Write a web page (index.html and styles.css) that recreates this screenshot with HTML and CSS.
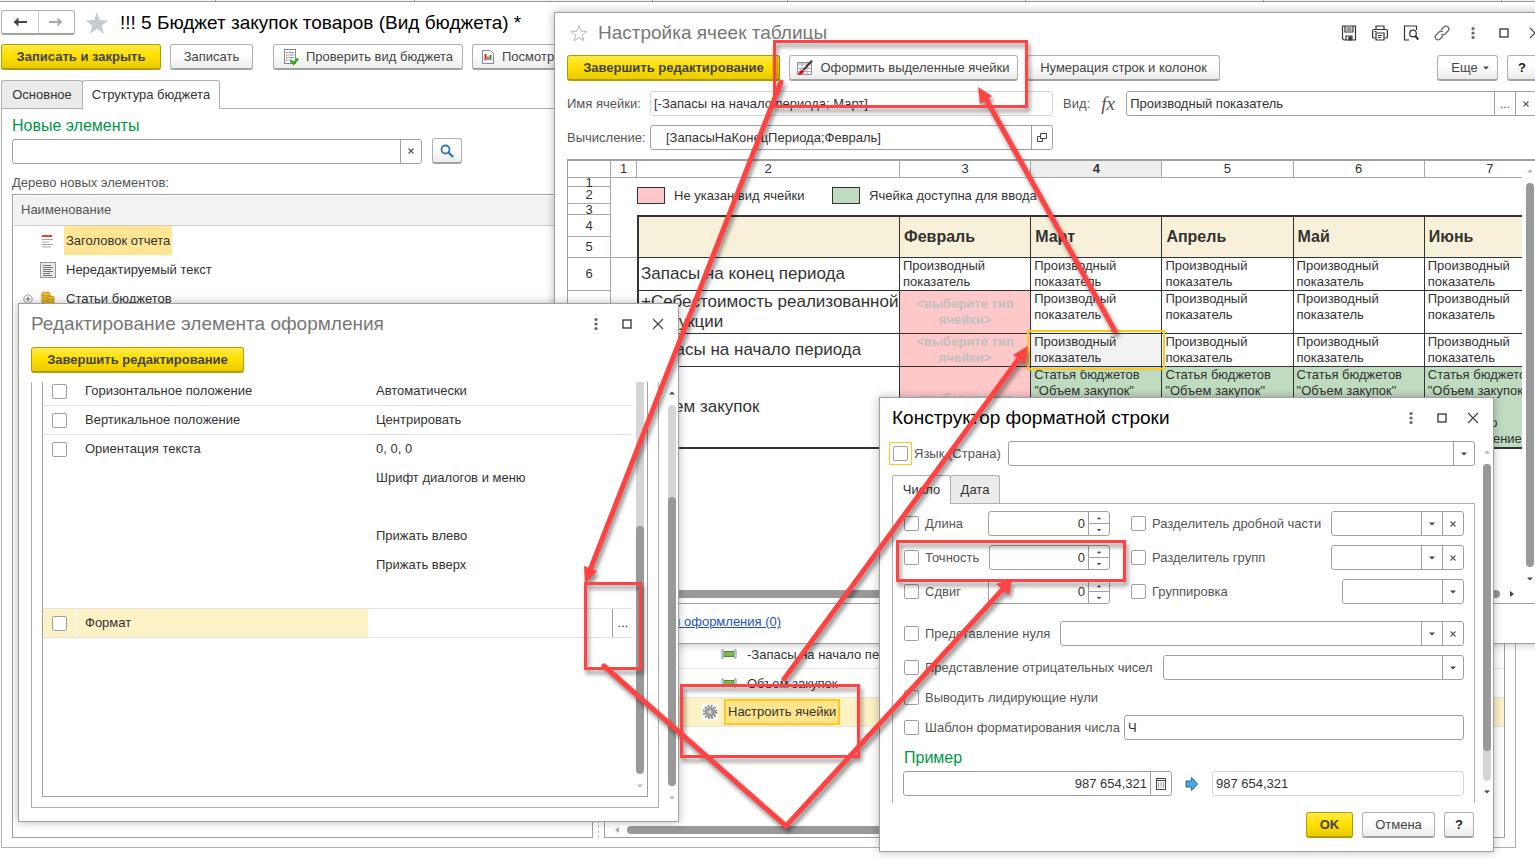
FILE: index.html
```html
<!DOCTYPE html>
<html lang="ru">
<head>
<meta charset="utf-8">
<title>Бюджет закупок товаров (Вид бюджета)</title>
<link rel="stylesheet" href="styles.css">
</head>
<body>
<svg class="defs" aria-hidden="true">
  <symbol id="dots" viewBox="0 0 16 16"><g fill="#666"><circle cx="8" cy="3.500" r="1.600"/><circle cx="8" cy="8" r="1.600"/><circle cx="8" cy="12.500" r="1.600"/></g></symbol>
  <symbol id="max" viewBox="0 0 16 16"><rect x="4" y="4" width="8" height="8" fill="none" stroke="#222" stroke-width="1.200"/></symbol>
  <symbol id="close" viewBox="0 0 16 16"><path d="M3 3l10 10M13 3L3 13" stroke="#444" stroke-width="1.200"/></symbol>
  <symbol id="x" viewBox="0 0 8 8"><path d="M2 2l4 4M6 2L2 6" stroke="#555" stroke-width=".9"/></symbol>
  <symbol id="down" viewBox="0 0 8 8"><path d="M1 2.500h6L4 5.500z" fill="#444"/></symbol>
  <symbol id="up" viewBox="0 0 8 8"><path d="M1 5.500h6L4 2.500z" fill="#444"/></symbol>
  <symbol id="cell" viewBox="0 0 16 10"><path d="M3 1H1v8h2M13 1h2v8h-2" fill="none" stroke="#5f93b5"/><rect x="3" y="2.500" width="10" height="5" fill="#7db94d" stroke="#4c8a2c"/></symbol>
</svg>

<div class="desktop">
  <div class="strip"><i class="s1"></i><i class="s2"></i><i class="s3"></i><i class="s4"></i><i class="s3"></i><i class="s3"></i><i class="s3"></i></div>

  <main class="app">
    <header class="app-head">
      <div class="nav">
        <button aria-label="Назад"><svg width="16" height="12" viewBox="0 0 16 12"><path d="M15 6H4" stroke="#444" stroke-width="2"/><path d="M6.500 1.500L1.500 6l5 4.500z" fill="#444"/></svg></button>
        <button aria-label="Вперед"><svg width="16" height="12" viewBox="0 0 16 12"><path d="M1 6h11" stroke="#aaa" stroke-width="2"/><path d="M9.500 1.500l5 4.500-5 4.500z" fill="#aaa"/></svg></button>
      </div>
      <svg class="star" width="24" height="24" viewBox="0 0 24 24"><path d="M12 1l2.900 8.100 8.600.3-6.800 5.300 2.400 8.300-7.100-4.900L4.900 23l2.400-8.300L.5 9.400l8.600-.3z" fill="#c8cbd0"/></svg>
      <h1>!!! 5 Бюджет закупок товаров (Вид бюджета) *</h1>
    </header>
    <div class="app-cmd">
      <button class="btn primary b-save">Записать и закрыть</button>
      <button class="btn b-write">Записать</button>
      <button class="btn b-check"><svg width="16" height="18" viewBox="0 0 16 18"><rect x="1.500" y="1.500" width="11" height="14" fill="#fff" stroke="#7b8b99"/><path d="M5.500 4.500H11M5.500 7H11M5.500 9.500H11M5.500 12H9" stroke="#8a97a3"/><path d="M3 4.500h1.500M3 7h1.500M3 12h1.500" stroke="#d33"/><path d="M3 9.500h1.500" stroke="#2a2"/><path d="M7.500 12.500l3 3 4.500-5" fill="none" stroke="#38a818" stroke-width="2.600"/></svg>Проверить вид бюджета</button>
      <button class="btn b-view"><svg width="14" height="16" viewBox="0 0 14 16"><path d="M1.500 1.500h8l3 3v10h-11z" fill="#fff" stroke="#7b8b99"/><path d="M4.500 5v6" stroke="#d22" stroke-width="2"/><path d="M7 7.500V11" stroke="#d22" stroke-width="1.500"/><path d="M9.500 6v5" stroke="#2a9a2a" stroke-width="2"/></svg>Посмотреть отчет</button>
    </div>
    <nav class="tabs app-tabs"><button class="tab">Основное</button><button class="tab on">Структура бюджета</button></nav>
    <div class="app-body">
      <section class="left">
        <h2>Новые элементы</h2>
        <div class="search">
          <div class="field"><input type="text" aria-label="Поиск"><button class="fb" aria-label="Очистить"><svg width="10" height="10"><use href="#x"/></svg></button></div>
          <button class="btn find" aria-label="Найти"><svg width="14" height="14" viewBox="0 0 14 14"><circle cx="5.500" cy="5.500" r="4" fill="none" stroke="#2f7ab5" stroke-width="1.800"/><path d="M8.500 8.500l4.500 4.500" stroke="#2f7ab5" stroke-width="2.400"/></svg></button>
        </div>
        <p class="cap">Дерево новых элементов:</p>
        <div class="tree">
          <div class="tree-head">Наименование</div>
          <ul>
            <li><span class="exp"></span><svg width="16" height="16" viewBox="0 0 16 16"><path d="M2 3h10" stroke="#d9482f" stroke-width="2"/><path d="M2 6.500h11M2 9h7M2 11.500h11M2 14h9" stroke="#a5a5a5"/></svg><span class="hl">Заголовок отчета</span></li>
            <li><span class="exp"></span><svg width="16" height="16" viewBox="0 0 16 16"><rect x=".5" y=".5" width="15" height="15" fill="#e8e8e8" stroke="#999"/><path d="M3 3.500h8M3 5.500h10M3 7.500h8M3 9.500h10M3 11.500h7M3 13.500h9" stroke="#777"/></svg><span class="nm">Нередактируемый текст</span></li>
            <li><span class="exp"><svg width="10" height="10" viewBox="0 0 10 10"><circle cx="5" cy="5" r="4.200" fill="#fff" stroke="#888" stroke-width=".8"/><path d="M2.500 5h5M5 2.500v5" stroke="#666" stroke-width=".9"/></svg></span><svg width="16" height="16" viewBox="0 0 16 16"><g fill="#f3c231" stroke="#a87b10" stroke-width=".7"><ellipse cx="6" cy="12.500" rx="4.500" ry="2"/><ellipse cx="6" cy="10" rx="4.500" ry="2"/><ellipse cx="6" cy="7.500" rx="4.500" ry="2"/><ellipse cx="6" cy="5" rx="4.500" ry="2"/><ellipse cx="6" cy="3" rx="4.500" ry="2"/><ellipse cx="11" cy="12" rx="3.500" ry="1.700"/><ellipse cx="11" cy="9.500" rx="3.500" ry="1.700"/><ellipse cx="11" cy="7" rx="3.500" ry="1.700"/></g></svg><span class="nm">Статьи бюджетов</span></li>
          </ul>
        </div>
      </section>
      <div class="splitter"></div>
      <section class="right">
        <ul class="rows">
          <li><svg width="16" height="10"><use href="#cell"/></svg><span class="nm">-Запасы на начало периода</span></li>
          <li><svg width="16" height="10"><use href="#cell"/></svg><span class="nm">Объем закупок</span></li>
          <li class="sel"><svg width="16" height="16" viewBox="0 0 16 16"><rect width="16" height="16" fill="#fff"/><circle cx="8" cy="8" r="6.200" fill="none" stroke="#888" stroke-width="2.200" stroke-dasharray="1.800 1.450"/><circle cx="8" cy="8" r="3.800" fill="none" stroke="#9c9c9c" stroke-width="3"/><circle cx="8" cy="8" r="2" fill="#ddd" stroke="#777" stroke-width=".6"/></svg><span class="pick">Настроить ячейки</span></li>
        </ul>
        <div class="hscroll low"><svg width="12" height="10" viewBox="0 0 12 10"><path d="M8 2v6L4 5z" fill="#aaa"/></svg><i></i></div>
      </section>
    </div>
  </main>

  <section class="win cells">
    <header class="bar">
      <svg width="18" height="18" viewBox="0 0 18 18"><path d="M9 1.500l2 5.700 6 .2-4.800 3.700 1.700 5.800L9 13.500l-4.900 3.400 1.700-5.800L1 7.400l6-.2z" fill="none" stroke="#b5b9bf"/></svg>
      <h2>Настройка ячеек таблицы</h2>
      <div class="tools">
        <svg width="16" height="16" viewBox="0 0 16 16" fill="none" stroke="#333" stroke-width="1.200"><path d="M1.500 1h13v14H3l-1.500-1.500z"/><path d="M4 1v6h8V1M5.500 3h5M5.500 5h5"/><path d="M5 15v-4h6v4"/><path d="M8 12h2v3H8z" fill="#333"/></svg>
        <svg width="16" height="16" viewBox="0 0 16 16" fill="none" stroke="#333" stroke-width="1.200"><path d="M4 4V1h8v3M3.500 13H1.500Q.6 13 .6 12V6q0-1.500 1.500-1.500h11.800q1.500 0 1.500 1.500v6q0 1-1 1h-2"/><path d="M4 8h8v7H4zM6 10.500h4M6 12.500h3M2.500 6.500h2"/></svg>
        <svg width="16" height="16" viewBox="0 0 16 16" fill="none" stroke="#333" stroke-width="1.200"><path d="M6 15H1.500V1h12v4"/><circle cx="10" cy="8.500" r="3.300"/><path d="M12.300 11l3 3.500" stroke-width="2"/></svg>
        <svg width="16" height="16" viewBox="0 0 16 16" fill="none" stroke="#666" stroke-width="1.300"><path d="M7 5l3-3q2-1.800 4 0 1.800 2 0 4l-3 3q-2 1.700-3.800.2M9 11l-3 3q-2 1.800-4 0-1.800-2 0-4l3-3q2-1.700 3.800-.2"/></svg>
        <svg width="16" height="16"><use href="#dots"/></svg><svg width="16" height="16"><use href="#max"/></svg><svg width="16" height="16"><use href="#close"/></svg>
      </div>
    </header>
    <div class="cmd">
      <button class="btn primary b-done">Завершить редактирование</button>
      <button class="btn b-format"><svg width="16" height="16" viewBox="0 0 16 16"><path d="M.5 2.500h14v12H.5z" fill="#fff" stroke="#8593a0"/><path d="M1 3h13v2.500H1z" fill="#ccd5dd"/><path d="M1 8.500h13M1 11.500h13M5 3v11M10 3v11" stroke="#a9b5c0"/><path d="M15 .5L6.500 10" stroke="#59301f" stroke-width="2"/><path d="M1 15q1-4 4-5.500l2.500 2Q5 15 1 15z" fill="#e01010"/></svg>Оформить выделенные ячейки</button>
      <button class="btn b-num">Нумерация строк и колонок</button>
      <span class="grow"></span>
      <button class="btn b-more">Еще<svg width="8" height="8"><use href="#down"/></svg></button>
      <button class="btn q">?</button>
    </div>
    <div class="line">
      <label class="lb" for="nm">Имя ячейки:</label>
      <div class="field ro f-name"><input id="nm" type="text" value="[-Запасы на начало периода; Март]" readonly></div>
      <label class="kind" for="kd">Вид:</label><span class="fx">fx</span>
      <div class="field grow"><input id="kd" type="text" value="Производный показатель"><button class="fb" aria-label="Выбрать">...</button><button class="fb" aria-label="Очистить"><svg width="10" height="10"><use href="#x"/></svg></button></div>
    </div>
    <div class="line">
      <label class="lb" for="calc">Вычисление:</label>
      <div class="field f-name f-calc"><input id="calc" type="text" value="[ЗапасыНаКонецПериода;Февраль]"><button class="fb" aria-label="Открыть"><svg width="10" height="10" viewBox="0 0 10 10" fill="none" stroke="#444"><path d="M3.500.5h6v5h-6zM3 3.500H.5v5h5V6"/></svg></button></div>
    </div>
    <div class="sheet">
      <div class="view">
        <table>
          <colgroup><col class="c0"><col class="c1"><col class="c2"><col class="cm"><col class="cm"><col class="cm"><col class="cm"><col class="cm"></colgroup>
          <thead><tr class="r17"><th></th><th>1</th><th>2</th><th>3</th><th class="cur">4</th><th>5</th><th>6</th><th>7</th></tr></thead>
          <tbody>
            <tr class="r9"><th><span>1</span></th><td colspan="7"></td></tr>
            <tr class="r17"><th>2</th><td></td><td colspan="6"><div class="legend"><i class="sw pink"></i><span class="l1">Не указан вид ячейки</span><i class="sw green"></i><span>Ячейка доступна для ввода</span></div></td></tr>
            <tr class="r11"><th><span>3</span></th><td colspan="7"></td></tr>
            <tr class="r22"><th>4</th><td></td><td class="m first" rowspan="2"></td><td class="m" rowspan="2">Февраль</td><td class="m" rowspan="2">Март</td><td class="m" rowspan="2">Апрель</td><td class="m" rowspan="2">Май</td><td class="m" rowspan="2">Июнь</td></tr>
            <tr class="r21"><th>5</th><td class="ln"></td></tr>
            <tr class="r33"><th>6</th><td></td><td class="n">Запасы на конец периода</td><td class="v">Производный показатель</td><td class="v">Производный показатель</td><td class="v">Производный показатель</td><td class="v">Производный показатель</td><td class="v">Производный показатель</td></tr>
            <tr class="r43"><th>7</th><td></td><td class="n">+Себестоимость реализованной продукции</td><td class="v none">&lt;выберите тип ячейки&gt;</td><td class="v">Производный показатель</td><td class="v">Производный показатель</td><td class="v">Производный показатель</td><td class="v">Производный показатель</td></tr>
            <tr class="r33"><th>8</th><td></td><td class="n">-Запасы на начало периода</td><td class="v none">&lt;выберите тип ячейки&gt;</td><td class="v active">Производный показатель</td><td class="v">Производный показатель</td><td class="v">Производный показатель</td><td class="v">Производный показатель</td></tr>
            <tr class="r82"><th>9</th><td></td><td class="n">Объем закупок</td><td class="v none">&lt;выберите тип ячейки&gt;</td><td class="v in">Статья бюджетов "Объем закупок"</td><td class="v in">Статья бюджетов "Объем закупок"</td><td class="v in">Статья бюджетов "Объем закупок"</td><td class="v in">Статья бюджетов "Объем закупок"<br>Сумма<br>Количество<br>Распределение</td></tr>
          </tbody>
        </table>
      </div>
      <div class="vscroll"><svg class="dim" width="8" height="8"><use href="#up"/></svg><i class="grow"></i><svg width="8" height="8"><use href="#down"/></svg></div>
      <div class="hscroll"><i></i><svg width="8" height="10" viewBox="0 0 8 10"><path d="M2 2v6l4-3z" fill="#444"/></svg></div>
    </div>
    <footer><a href="#decor">Элементы оформления (0)</a></footer>
  </section>

  <section class="win edit">
    <header class="bar">
      <h2>Редактирование элемента оформления</h2>
      <div class="tools"><svg width="16" height="16"><use href="#dots"/></svg><svg width="16" height="16"><use href="#max"/></svg><svg width="16" height="16"><use href="#close"/></svg></div>
    </header>
    <div class="cmd"><button class="btn primary b-done">Завершить редактирование</button></div>
    <div class="edit-body">
      <div class="outer">
        <div class="inner">
          <div class="props-wrap"><table class="props">
            <colgroup><col class="p1"><col class="p2"><col><col class="p4"></colgroup>
            <tr class="u"><td><input type="checkbox" id="p1"></td><td><label for="p1">Горизонтальное положение</label></td><td colspan="2">Автоматически</td></tr>
            <tr class="u"><td><input type="checkbox" id="p2"></td><td><label for="p2">Вертикальное положение</label></td><td colspan="2">Центрировать</td></tr>
            <tr><td><input type="checkbox" id="p3"></td><td><label for="p3">Ориентация текста</label></td><td colspan="2">0, 0, 0</td></tr>
            <tr><td></td><td></td><td colspan="2">Шрифт диалогов и меню</td></tr>
            <tr><td></td><td></td><td colspan="2"></td></tr>
            <tr><td></td><td></td><td colspan="2">Прижать влево</td></tr>
            <tr><td></td><td></td><td colspan="2">Прижать вверх</td></tr>
            <tr class="u"><td></td><td></td><td colspan="2"></td></tr>
            <tr class="u fmt"><td><input type="checkbox" id="p4"></td><td><label for="p4">Формат</label></td><td></td><td><button aria-label="Выбрать формат">...</button></td></tr>
          </table></div>
          <div class="vscroll in1"><i class="thumb"></i><svg class="dim" width="8" height="8"><use href="#down"/></svg></div>
        </div>
      </div>
      <div class="vscroll in2"><svg width="8" height="8"><use href="#up"/></svg><span class="track"><i class="thumb"></i></span><svg class="dim" width="8" height="8"><use href="#down"/></svg></div>
    </div>
  </section>

  <section class="win fmtwin">
    <header class="bar">
      <h2>Конструктор форматной строки</h2>
      <div class="tools"><svg width="16" height="16"><use href="#dots"/></svg><svg width="16" height="16"><use href="#max"/></svg><svg width="16" height="16"><use href="#close"/></svg></div>
    </header>
    <div class="fw-main">
      <div class="fw-col">
        <div class="fr lang"><span class="focus"><input type="checkbox" id="lang"></span><label for="lang">Язык (Страна)</label><div class="field grow"><select aria-label="Язык"></select><span class="fb"><svg width="8" height="8"><use href="#down"/></svg></span></div></div>
        <nav class="tabs fw-tabs"><button class="tab on">Число</button><button class="tab">Дата</button></nav>
        <div class="panel">
          <div class="duo">
            <div class="fr"><input type="checkbox" id="a1"><label for="a1">Длина</label><div class="field num"><input type="text" value="0" aria-label="Длина"><span class="spin"><button aria-label="Больше"><svg width="6" height="6"><use href="#up"/></svg></button><button aria-label="Меньше"><svg width="6" height="6"><use href="#down"/></svg></button></span></div></div>
            <div class="fr"><input type="checkbox" id="b1"><label for="b1">Разделитель дробной части</label><div class="field w133"><select aria-label="Разделитель дробной части"></select><span class="fb"><svg width="8" height="8"><use href="#down"/></svg></span><button class="fb" aria-label="Очистить"><svg width="10" height="10"><use href="#x"/></svg></button></div></div>
            <div class="fr"><input type="checkbox" id="a2"><label for="a2">Точность</label><div class="field num"><input type="text" value="0" aria-label="Точность"><span class="spin"><button aria-label="Больше"><svg width="6" height="6"><use href="#up"/></svg></button><button aria-label="Меньше"><svg width="6" height="6"><use href="#down"/></svg></button></span></div></div>
            <div class="fr"><input type="checkbox" id="b2"><label for="b2">Разделитель групп</label><div class="field w133"><select aria-label="Разделитель групп"></select><span class="fb"><svg width="8" height="8"><use href="#down"/></svg></span><button class="fb" aria-label="Очистить"><svg width="10" height="10"><use href="#x"/></svg></button></div></div>
            <div class="fr"><input type="checkbox" id="a3"><label for="a3">Сдвиг</label><div class="field num"><input type="text" value="0" aria-label="Сдвиг"><span class="spin"><button aria-label="Больше"><svg width="6" height="6"><use href="#up"/></svg></button><button aria-label="Меньше"><svg width="6" height="6"><use href="#down"/></svg></button></span></div></div>
            <div class="fr"><input type="checkbox" id="b3"><label for="b3">Группировка</label><div class="field w122"><select aria-label="Группировка"></select><span class="fb"><svg width="8" height="8"><use href="#down"/></svg></span></div></div>
          </div>
          <div class="stack">
            <div class="fr"><input type="checkbox" id="c1"><label for="c1">Представление нуля</label><div class="field grow"><select aria-label="Представление нуля"></select><span class="fb"><svg width="8" height="8"><use href="#down"/></svg></span><button class="fb" aria-label="Очистить"><svg width="10" height="10"><use href="#x"/></svg></button></div></div>
            <div class="fr"><input type="checkbox" id="c2"><label for="c2">Представление отрицательных чисел</label><div class="field grow"><select aria-label="Представление отрицательных чисел"></select><span class="fb"><svg width="8" height="8"><use href="#down"/></svg></span></div></div>
            <div class="fr short"><input type="checkbox" id="c3"><label for="c3">Выводить лидирующие нули</label></div>
            <div class="fr tight"><input type="checkbox" id="c4"><label for="c4">Шаблон форматирования числа</label><div class="field grow"><input type="text" value="Ч" aria-label="Шаблон"></div></div>
          </div>
          <h3>Пример</h3>
          <div class="sample">
            <div class="field s-in"><input type="text" value="987 654,321" aria-label="Число"><button class="fb" aria-label="Калькулятор"><svg width="10" height="12" viewBox="0 0 10 12"><rect x=".5" y=".5" width="9" height="11" fill="none" stroke="#444"/><path d="M1 2.500h8" stroke="#444"/><path d="M2 5h1M4.500 5h1M7 5h1M2 7h1M4.500 7h1M7 7h1M2 9h1M4.500 9h1M7 9h1" stroke="#444"/></svg></button></div>
            <svg width="14" height="16" viewBox="0 0 14 16"><path d="M1 5h5.500V1.500L12.500 8l-6 6.500V11H1z" fill="#3fa9e8" stroke="#2a6a9a"/></svg>
            <div class="field ro grow"><input type="text" value="987 654,321" readonly aria-label="Результат"></div>
          </div>
        </div>
      </div>
      <div class="vscroll in3"><svg class="dim" width="8" height="8"><use href="#up"/></svg><span class="track"><i class="thumb"></i></span><svg width="8" height="8"><use href="#down"/></svg></div>
    </div>
    <footer class="fw-foot"><button class="btn primary ok">OK</button><button class="btn cancel">Отмена</button><button class="btn q">?</button></footer>
  </section>

  <svg class="marks" width="1535" height="860" viewBox="0 0 1535 860" aria-hidden="true">
    <g fill="none" stroke="#ff4343" stroke-width="3">
      <rect x="774.500" y="41.500" width="252" height="65"/><rect x="585.500" y="583.500" width="55" height="85"/>
      <rect x="681.500" y="685.500" width="177" height="71"/><rect x="897.500" y="541.500" width="227" height="39"/>
    </g>
    <g fill="none" stroke="#ff4343" stroke-width="5" stroke-linecap="round">
      <path d="M781 82L590 570"/><path d="M784 679L1020 357"/><path d="M1115 331L986 99"/><path d="M604 666L786 826L1002 590"/>
    </g>
    <g fill="#ff4343"><path d="M585 584l-1-18 13 5z"/><path d="M1028 346l-3 18-12-9z"/><path d="M978 87l14 9-12 8z"/><path d="M1012 579l-3 16-13-11z"/></g>
  </svg>
</div>
</body>
</html>
```
FILE: styles.css
```css
* { box-sizing: border-box; }
body { margin: 0; background: #fff; color: #333; font: 13px/16px "Liberation Sans", Arial, sans-serif; }
h1, h2, h3, p, ul { margin: 0; padding: 0; font-weight: normal; }
ul { list-style: none; }
button, input, select { font: inherit; color: inherit; margin: 0; padding: 0; border: 0; background: none; }
svg { flex: none; display: block; }
.defs { display: none; }
.grow { flex: 1; }
.dim { opacity: .4; }
.desktop { position: relative; min-height: 860px; overflow: hidden; display: flex; flex-direction: column; }

.strip { display: flex; height: 2px; border-bottom: 1px solid #999; background: #f2f2f2; }
.strip i { border-right: 1px solid #999; }
.s1 { width: 216px; } .s2 { width: 199px; } .s3 { width: 238px; } .s4 { width: 135px; }

.btn { height: 26px; display: flex; align-items: center; justify-content: center; gap: 7px; border: 1px solid #b0b0b0; border-bottom: 2px solid #a2a2a2; border-radius: 3px; background: linear-gradient(#fff 40%, #ebebeb); color: #444; white-space: nowrap; flex: none; }
.btn.primary { border-color: #b39b00; background: linear-gradient(#ffe94a, #ffe100 45%, #eacb00); font-weight: bold; }
.field { display: flex; height: 25px; min-width: 0; border: 1px solid #a0a0a0; border-radius: 3px; background: #fff; }
.field input, .field select { flex: 1; min-width: 0; width: 0; padding: 0 3px; appearance: none; outline: 0; }
.field.ro { border-color: #d4d4d4; }
.fb { width: 21px; flex: none; display: flex; align-items: center; justify-content: center; border-left: 1px solid #a0a0a0; font-size: 12px; }
input[type=checkbox] { appearance: none; width: 15px; height: 15px; flex: none; display: block; border: 1px solid #a0a0a0; border-radius: 2px; background: #fff; }

.tabs { display: flex; }
.tab { height: 28px; border: 1px solid #b0b0b0; border-bottom: 0; border-radius: 3px 3px 0 0; background: #ebebeb; }
.tab.on { background: #fff; height: 29px; margin-bottom: -1px; position: relative; }

.app { flex: 1; display: flex; flex-direction: column; padding: 8px 19px 12px 1px; }
.app-head { display: flex; align-items: center; height: 25px; }
.nav { display: flex; width: 74px; height: 25px; border: 1px solid #b0b0b0; border-bottom: 2px solid #a2a2a2; border-radius: 3px; }
.nav button { flex: 1; display: flex; align-items: center; justify-content: center; }
.nav button + button { border-left: 1px solid #ccc; }
.star { margin: 0 11px 0 10px; }
h1 { font-size: 19px; line-height: 24px; color: #000; }
.app-cmd { display: flex; margin-top: 9px; }
.b-save { width: 160px; margin-right: 9px; } .b-write { width: 83px; margin-right: 20px; }
.b-check { width: 190px; margin-right: 9px; } .b-view { padding: 0 8px; }
.app-tabs { margin-top: 10px; }
.app-tabs .tab { width: 82px; } .app-tabs .tab.on { width: 138px; margin-left: -1px; }
.app-body { flex: 1; display: flex; border: 1px solid #b0b0b0; padding: 9px 10px 9px; }
.left { width: 581px; display: flex; flex-direction: column; }
.left h2, .panel h3 { font-size: 16px; line-height: 16px; color: #009646; }
.search { display: flex; align-items: center; gap: 10px; margin-top: 4px; }
.search .field { width: 410px; }
.find { width: 30px; }
.cap { margin-top: 11px; color: #555; }
.tree { flex: 1; margin-top: 3px; border: 1px solid #a0a0a0; }
.tree-head { height: 30px; line-height: 28px; margin: 1px 1px 0; padding-left: 7px; background: #f2f2f2; border-bottom: 1px solid #ccc; color: #555; }
.tree li { display: flex; align-items: center; height: 29px; }
.tree .exp { width: 27px; padding-left: 10px; }
.hl, .nm { margin-left: 8px; padding: 0 2px; line-height: 29px; }
.hl { background: #ffe594; }
.splitter { width: 1px; margin: 0 5px; border-left: 1px dashed #c4c4c4; }
.right { flex: 1; border: 1px solid #a0a0a0; display: flex; flex-direction: column; justify-content: flex-end; min-width: 0; }
.rows { margin-bottom: 110px; }
.rows li { display: flex; align-items: center; height: 29px; padding-left: 116px; border-bottom: 1px solid #e4e4e4; }
.rows .sel { padding-left: 97px; background: #fdf1c6; }
.pick { margin-left: 6px; padding: 3px 2px; border: 2px solid #ffc81e; background: #ffe48c; }
.hscroll { display: flex; align-items: center; gap: 8px; height: 14px; }
.hscroll i { flex: 1; height: 8px; border-radius: 4px; background: #999; }
.hscroll.low { margin: -14px 20px 0 6px; gap: 4px; }

.win { position: absolute; background: #fff; border: 1px solid #a0a0a0; box-shadow: 0 0 9px rgba(0,0,0,.28); display: flex; flex-direction: column; }
.bar { display: flex; align-items: center; height: 40px; padding: 0 12px; }
.bar h2 { font-size: 19px; line-height: 24px; color: #777; white-space: nowrap; }
.tools { display: flex; gap: 15px; margin-left: auto; }
.cmd { display: flex; padding: 0 12px; }
.b-done { width: 213px; }
.q { width: 30px; font-weight: bold; color: #222; }

.cells { left: 554px; top: 12px; right: -15px; }
.cells .bar { height: 42px; padding: 0 6px 3px 15px; gap: 10px; }
.b-format { width: 229px; margin-left: 9px; } .b-num { width: 193px; margin-left: 9px; }
.b-more { width: 61px; margin-right: 9px; padding-left: 6px; gap: 4px; }
.line { display: flex; align-items: center; padding: 0 12px; margin-top: 10px; color: #555; }
.line + .line { margin-top: 9px; }
.lb { width: 83px; white-space: nowrap; }
.line input { color: #333; }
.f-name { width: 403px; } .f-calc input { padding-left: 15px; }
.kind { margin-left: 10px; }
.fx { width: 36px; text-align: center; font: italic 19px/20px "Liberation Serif", serif; }
.sheet { margin: 9px 12px 0; border: 1px solid #a0a0a0; border-width: 2px 0 1px 1px; display: grid; grid-template-columns: 1fr 14px; grid-template-rows: 426px 16px; }
.view { overflow: hidden; margin-right: 1px; min-width: 0; }
.sheet table { table-layout: fixed; width: 988px; border-collapse: separate; border-spacing: 0; }
.c0 { width: 43px; } .c1 { width: 26px; } .c2 { width: 263px; }
.sheet td, .sheet th { padding: 0; }
.sheet th { font-weight: normal; border: 0 solid #a8a8a8; border-width: 0 1px 1px 0; text-align: center; line-height: 14px; }
.sheet thead th { line-height: 16px; }
.sheet th span { display: block; height: 8px; line-height: 9px; }
.sheet th.cur { font-weight: bold; background: #eee; }
.r9 { height: 9px; } .r11 { height: 11px; } .r17 { height: 17px; } .r21 { height: 21px; } .r22 { height: 22px; }
.r33 { height: 33px; } .r43 { height: 43px; } .r82 { height: 82px; }
.legend { display: flex; align-items: center; gap: 9px; height: 17px; }
.sw { width: 28px; height: 17px; border: 1px solid #333; }
.l1 { width: 149px; }
.pink { background: #ffc8c8; } .green { background: #c0dcc0; }
.sheet .m { background: #f8f1da; border-top: 2px solid #333; border-right: 1px solid #333; border-bottom: 1px solid #333; font-weight: bold; font-size: 16px; padding-left: 4px; }
.sheet .first, .sheet .n { border-left: 2px solid #333; }
.ln { border-bottom: 1px solid #a8a8a8; }
.sheet .n { border-right: 1px solid #333; border-bottom: 1px solid #333; font-size: 17px; line-height: 20px; padding-left: 2px; }
.sheet .v { border-right: 1px solid #333; border-bottom: 1px solid #333; vertical-align: top; line-height: 16px; padding-left: 3px; }
.sheet .none { background: #ffc8c8; color: #c0c0c0; font-weight: bold; text-align: center; vertical-align: middle; padding: 0; }
.sheet .in { background: #c0dcc0; }
.r82 .n, .r82 .v { border-bottom-width: 2px; }
.sheet .active { position: relative; background: #f2f2f2; }
.active::after { content: ""; position: absolute; inset: -4px; border: 2px solid #ffc81e; }
.vscroll { display: flex; flex-direction: column; align-items: center; }
.vscroll i { width: 8px; border-radius: 4px; background: #999; }
.sheet .vscroll { padding: 6px 0 4px; gap: 8px; }
.sheet .hscroll { grid-column: 1 / 3; padding-right: 21px; }
.cells footer { padding: 10px 0 13px 63px; }
.cells a { color: #1a53c0; }

.edit { left: 18px; top: 303px; width: 661px; height: 519px; }
.edit .cmd { margin-top: 3px; }
.edit-body { flex: 1; display: flex; margin: 9px 0 13px 12px; min-height: 0; }
.outer { flex: 1; display: flex; border: 1px solid #b0b0b0; border-top: 0; padding: 0 10px 10px; }
.inner { flex: 1; display: flex; border: 1px solid #a0a0a0; border-top: 0; overflow: hidden; }
.props-wrap { flex: 1; overflow: hidden; }
.props { width: 100%; margin-top: -5px; table-layout: fixed; border-collapse: separate; border-spacing: 0; }
.props tr { height: 29px; }
.props td { padding: 0; border-bottom: 1px solid transparent; }
.props .u td { border-bottom-color: #e2e2e2; }
.p1 { width: 34px; } .p2 { width: 291px; } .p4 { width: 21px; }
.props td:first-child { padding-left: 9px; }
.props td:nth-child(2), .props td:nth-child(3) { padding-left: 8px; }
.fmt td:nth-child(-n+2) { background: #fdf1c6; }
.fmt td:first-child { border-right: 1px solid #fff; }
.fmt button { display: block; width: 21px; height: 28px; border-left: 1px solid #a0a0a0; }
.in1 { width: 14px; padding: 0 0 6px; background: linear-gradient(#d5d5d5, #d5d5d5) 3px 0 / 8px 160px no-repeat; }
.in1 .thumb { flex: 1; margin: 144px 0 8px; }
.in2 { width: 19px; padding: 7px 2px 6px 9px; }
.track { flex: 1; display: flex; margin: 8px 0; border-radius: 4px; background: #d5d5d5; }
.in2 .thumb { margin-top: 92px; }

.fmtwin { left: 879px; top: 397px; width: 615px; height: 455px; }
.fmtwin .bar h2 { color: #000; }
.fw-main { flex: 1; display: flex; min-height: 0; }
.fw-col { flex: 1; padding: 3px 0 0 12px; display: flex; flex-direction: column; }
.fr { display: flex; align-items: center; height: 25px; color: #555; white-space: nowrap; }
.fr input { color: #333; }
.fr label { margin: 0 10px 0 6px; }
.focus { margin: 0 0 0 -3px; padding: 3px; border: 1px solid #ffc81e; }
.fr.lang label { margin: 0 7px 0 2px; }
.fr.tight label { margin-right: 4px; }
.fw-tabs { margin-top: 9px; }
.fw-tabs .tab { width: 50px; } .fw-tabs .tab.on { width: 59px; margin-right: -1px; }
.panel { flex: 1; border: 1px solid #b0b0b0; border-bottom: 0; padding: 7px 10px 0 11px; }
.duo { display: grid; grid-template-columns: 206px 1fr; gap: 9px 21px; }
.duo .field { margin-left: auto; }
.num { width: 122px; } .num input { text-align: right; }
.w133 { width: 133px; } .w122 { width: 122px; }
.spin { width: 21px; border-left: 1px solid #a0a0a0; display: flex; flex-direction: column; }
.spin button { flex: 1; display: flex; align-items: center; justify-content: center; }
.spin button + button { border-top: 1px solid #a0a0a0; }
.stack { margin-top: 17px; display: grid; gap: 9px; }
.short { height: 17px; }
.panel h3 { margin: 10px 0 5px; }
.sample { display: flex; align-items: center; gap: 13px; }
.s-in { width: 269px; margin-left: -1px; } .s-in input { text-align: right; }
.in3 { width: 21px; padding: 10px 5px 7px 8px; }
.in3 .track { margin: 8px 0 7px; }
.in3 .thumb { margin-bottom: 30px; }
.fw-foot { display: flex; justify-content: flex-end; gap: 9px; padding: 9px 19px 13px; }
.ok { width: 47px; } .cancel { width: 73px; }

.marks { position: absolute; left: 0; top: 0; pointer-events: none; filter: drop-shadow(2px 4px 2px rgba(0,0,0,.45)); }
```
